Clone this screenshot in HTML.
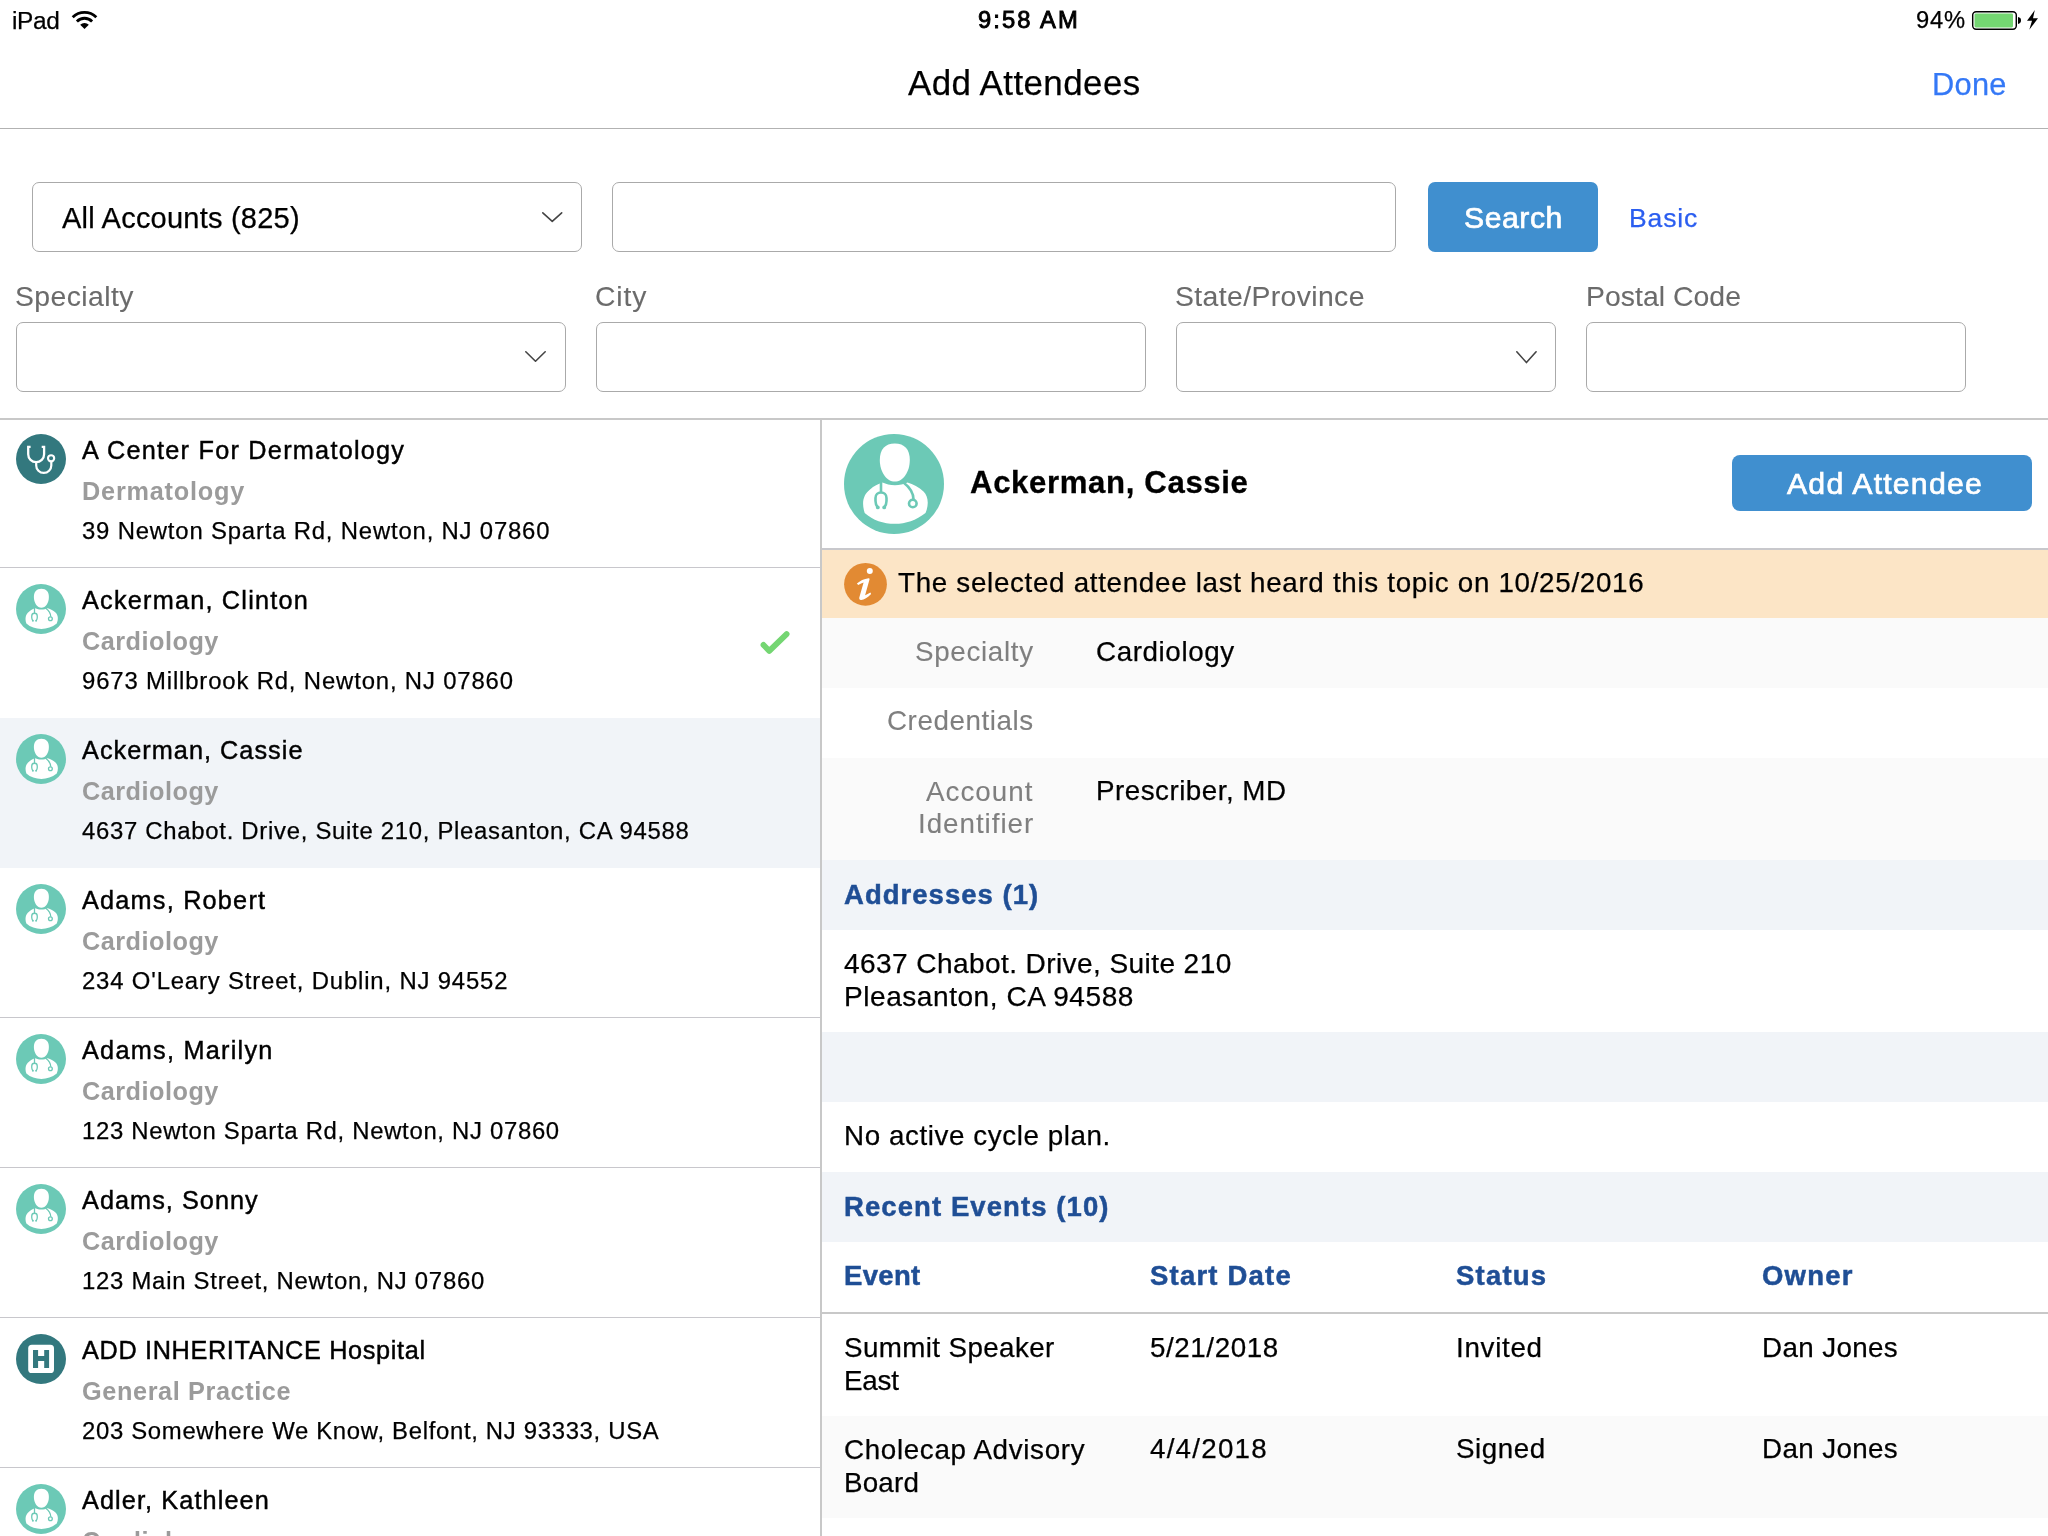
<!DOCTYPE html><html><head><meta charset="utf-8"><title>Add Attendees</title><style>
html,body{margin:0;padding:0;width:2048px;height:1536px;overflow:hidden;background:#fff;}
body{position:relative;font-family:"Liberation Sans", sans-serif;}
.t{position:absolute;white-space:nowrap;line-height:1;will-change:transform;}
</style></head><body>
<svg style="position:absolute;left:70px;top:8px" width="30" height="24" viewBox="70 8 30 24"><path d="M71.7 16.2 A18.1 18.1 0 0 1 97.3 16.2 L95.3 18.2 A15.3 15.3 0 0 0 73.7 18.2 Z" fill="#000"/><path d="M75.9 20.4 A12.1 12.1 0 0 1 93.1 20.4 L91.1 22.4 A9.3 9.3 0 0 0 77.9 22.4 Z" fill="#000"/><path d="M80.2 24.7 A6.1 6.1 0 0 1 88.8 24.7 L84.5 29 Z" fill="#000"/></svg>
<svg style="position:absolute;left:1960px;top:0px" width="88" height="40" viewBox="1960 0 88 40"><rect x="1972.7" y="11.7" width="43.6" height="17.5" rx="3.4" fill="none" stroke="#000" stroke-width="1.45"/><rect x="1974.5" y="13.5" width="38.5" height="13.9" rx="1.3" fill="#74d672"/><path d="M2018 17 C2020 17.3 2021 18.5 2021 20.4 C2021 22.3 2020 23.6 2018 23.9 Z" fill="#000"/><path d="M2034.8 10.1 L2027 20.8 L2032 20.8 L2029.3 29.7 L2038 18.3 L2033 18.3 Z" fill="#000"/></svg>
<div style="position:absolute;left:0px;top:128px;width:2048px;height:1px;background:#b2b2b2;"></div>
<div style="position:absolute;left:32px;top:182px;width:548px;height:68px;border:1px solid #aaa;border-radius:7px;background:#fff"></div>
<svg style="position:absolute;left:539.7px;top:209.8px" width="24.5" height="14.199999999999989" viewBox="-2 -2 24.5 14.199999999999989"><path d="M0.8 0.8 L10.25 9.399999999999988 L19.7 0.8" stroke="#444" stroke-width="1.6" fill="none" stroke-linecap="round" stroke-linejoin="round"/></svg>
<div style="position:absolute;left:612px;top:182px;width:782px;height:68px;border:1px solid #aaa;border-radius:7px;background:#fff"></div>
<div style="position:absolute;left:1428px;top:182px;width:170px;height:70px;border-radius:7px;background:#408fcf"></div>
<div style="position:absolute;left:16px;top:322px;width:548px;height:68px;border:1px solid #aaa;border-radius:7px;background:#fff"></div>
<div style="position:absolute;left:596px;top:322px;width:548px;height:68px;border:1px solid #aaa;border-radius:7px;background:#fff"></div>
<div style="position:absolute;left:1176px;top:322px;width:378px;height:68px;border:1px solid #aaa;border-radius:7px;background:#fff"></div>
<div style="position:absolute;left:1586px;top:322px;width:378px;height:68px;border:1px solid #aaa;border-radius:7px;background:#fff"></div>
<svg style="position:absolute;left:523px;top:349px" width="25" height="15" viewBox="-2 -2 25 15"><path d="M0.8 0.8 L10.5 10.2 L20.2 0.8" stroke="#444" stroke-width="1.6" fill="none" stroke-linecap="round" stroke-linejoin="round"/></svg>
<svg style="position:absolute;left:1513.7px;top:348.6px" width="24.899999999999864" height="16.399999999999977" viewBox="-2 -2 24.899999999999864 16.399999999999977"><path d="M0.8 0.8 L10.449999999999932 11.599999999999977 L20.099999999999863 0.8" stroke="#444" stroke-width="1.6" fill="none" stroke-linecap="round" stroke-linejoin="round"/></svg>
<div style="position:absolute;left:0px;top:418px;width:2048px;height:2px;background:#c8c8c8;"></div>
<div style="position:absolute;left:0px;top:718px;width:820px;height:150px;background:#f1f4f8;"></div>
<div style="position:absolute;left:16px;top:434px;width:50px;height:50px"><svg width="50" height="50" viewBox="0 0 50 50" style="display:block"><circle cx="25" cy="25" r="25" fill="#33787e"/><path d="M14.6 12.9 L12.2 12.9 L12.2 20.2 A7.95 7.95 0 0 0 28.1 20.2 L28.1 12.9 L25.7 12.9" stroke="#fff" stroke-width="2.3" fill="none" stroke-linejoin="miter"/><path d="M20.2 28 L20.2 31.4 A7.55 7.55 0 0 0 35.3 31.4 L35.3 27.6" stroke="#fff" stroke-width="2.2" fill="none"/><circle cx="35.1" cy="24.3" r="3.1" stroke="#fff" stroke-width="2.1" fill="none"/></svg></div>
<div style="position:absolute;left:0px;top:567px;width:820px;height:1px;background:#c8c7cc;"></div>
<div style="position:absolute;left:16px;top:584px;width:50px;height:50px"><svg width="50" height="50" viewBox="0 0 100 100" style="display:block"><circle cx="50" cy="50" r="50" fill="#6cc9b6"/><path d="M50.8 9.6 C60.5 9.6 65.8 15.5 65.8 26 C65.8 38 59 47.6 50.8 47.6 C42.6 47.6 35.8 38 35.8 26 C35.8 15.5 41.1 9.6 50.8 9.6 Z" fill="#fff"/><path d="M20.7 79 C17.5 69 19 61 26 55.5 C30 52 34 50 38.5 48.6 C42 50.3 46 51.2 51 51.2 C55.5 51.2 59.5 50.2 63.5 48.4 C69 50 75 53 79.5 57.5 C84.5 62.5 85 71 81.5 79 C72 86.5 62 89.8 50.8 89.8 C39.5 89.8 29 86.5 20.7 79 Z" fill="#fff"/><path d="M37 48 L37 58.5" stroke="#6cc9b6" stroke-width="2.6" fill="none"/><path d="M33.6 73.2 C32 71 31.5 69.5 31.5 67 L31.5 64 C31.5 60.5 34 58.5 37 58.5 C40 58.5 42.5 60.5 42.5 64 L42.5 67 C42.5 69.5 42 71 40.4 73.2" stroke="#6cc9b6" stroke-width="2.6" fill="none"/><circle cx="33.8" cy="73.4" r="1.9" fill="#6cc9b6"/><circle cx="40.2" cy="73.4" r="1.9" fill="#6cc9b6"/><path d="M59.5 48.5 C66 53.5 69.5 59 69.5 65.5" stroke="#6cc9b6" stroke-width="2.6" fill="none"/><circle cx="68.8" cy="69.5" r="3.8" stroke="#6cc9b6" stroke-width="2.6" fill="#fff"/></svg></div>
<div style="position:absolute;left:16px;top:734px;width:50px;height:50px"><svg width="50" height="50" viewBox="0 0 100 100" style="display:block"><circle cx="50" cy="50" r="50" fill="#6cc9b6"/><path d="M50.8 9.6 C60.5 9.6 65.8 15.5 65.8 26 C65.8 38 59 47.6 50.8 47.6 C42.6 47.6 35.8 38 35.8 26 C35.8 15.5 41.1 9.6 50.8 9.6 Z" fill="#fff"/><path d="M20.7 79 C17.5 69 19 61 26 55.5 C30 52 34 50 38.5 48.6 C42 50.3 46 51.2 51 51.2 C55.5 51.2 59.5 50.2 63.5 48.4 C69 50 75 53 79.5 57.5 C84.5 62.5 85 71 81.5 79 C72 86.5 62 89.8 50.8 89.8 C39.5 89.8 29 86.5 20.7 79 Z" fill="#fff"/><path d="M37 48 L37 58.5" stroke="#6cc9b6" stroke-width="2.6" fill="none"/><path d="M33.6 73.2 C32 71 31.5 69.5 31.5 67 L31.5 64 C31.5 60.5 34 58.5 37 58.5 C40 58.5 42.5 60.5 42.5 64 L42.5 67 C42.5 69.5 42 71 40.4 73.2" stroke="#6cc9b6" stroke-width="2.6" fill="none"/><circle cx="33.8" cy="73.4" r="1.9" fill="#6cc9b6"/><circle cx="40.2" cy="73.4" r="1.9" fill="#6cc9b6"/><path d="M59.5 48.5 C66 53.5 69.5 59 69.5 65.5" stroke="#6cc9b6" stroke-width="2.6" fill="none"/><circle cx="68.8" cy="69.5" r="3.8" stroke="#6cc9b6" stroke-width="2.6" fill="#fff"/></svg></div>
<div style="position:absolute;left:16px;top:884px;width:50px;height:50px"><svg width="50" height="50" viewBox="0 0 100 100" style="display:block"><circle cx="50" cy="50" r="50" fill="#6cc9b6"/><path d="M50.8 9.6 C60.5 9.6 65.8 15.5 65.8 26 C65.8 38 59 47.6 50.8 47.6 C42.6 47.6 35.8 38 35.8 26 C35.8 15.5 41.1 9.6 50.8 9.6 Z" fill="#fff"/><path d="M20.7 79 C17.5 69 19 61 26 55.5 C30 52 34 50 38.5 48.6 C42 50.3 46 51.2 51 51.2 C55.5 51.2 59.5 50.2 63.5 48.4 C69 50 75 53 79.5 57.5 C84.5 62.5 85 71 81.5 79 C72 86.5 62 89.8 50.8 89.8 C39.5 89.8 29 86.5 20.7 79 Z" fill="#fff"/><path d="M37 48 L37 58.5" stroke="#6cc9b6" stroke-width="2.6" fill="none"/><path d="M33.6 73.2 C32 71 31.5 69.5 31.5 67 L31.5 64 C31.5 60.5 34 58.5 37 58.5 C40 58.5 42.5 60.5 42.5 64 L42.5 67 C42.5 69.5 42 71 40.4 73.2" stroke="#6cc9b6" stroke-width="2.6" fill="none"/><circle cx="33.8" cy="73.4" r="1.9" fill="#6cc9b6"/><circle cx="40.2" cy="73.4" r="1.9" fill="#6cc9b6"/><path d="M59.5 48.5 C66 53.5 69.5 59 69.5 65.5" stroke="#6cc9b6" stroke-width="2.6" fill="none"/><circle cx="68.8" cy="69.5" r="3.8" stroke="#6cc9b6" stroke-width="2.6" fill="#fff"/></svg></div>
<div style="position:absolute;left:0px;top:1017px;width:820px;height:1px;background:#c8c7cc;"></div>
<div style="position:absolute;left:16px;top:1034px;width:50px;height:50px"><svg width="50" height="50" viewBox="0 0 100 100" style="display:block"><circle cx="50" cy="50" r="50" fill="#6cc9b6"/><path d="M50.8 9.6 C60.5 9.6 65.8 15.5 65.8 26 C65.8 38 59 47.6 50.8 47.6 C42.6 47.6 35.8 38 35.8 26 C35.8 15.5 41.1 9.6 50.8 9.6 Z" fill="#fff"/><path d="M20.7 79 C17.5 69 19 61 26 55.5 C30 52 34 50 38.5 48.6 C42 50.3 46 51.2 51 51.2 C55.5 51.2 59.5 50.2 63.5 48.4 C69 50 75 53 79.5 57.5 C84.5 62.5 85 71 81.5 79 C72 86.5 62 89.8 50.8 89.8 C39.5 89.8 29 86.5 20.7 79 Z" fill="#fff"/><path d="M37 48 L37 58.5" stroke="#6cc9b6" stroke-width="2.6" fill="none"/><path d="M33.6 73.2 C32 71 31.5 69.5 31.5 67 L31.5 64 C31.5 60.5 34 58.5 37 58.5 C40 58.5 42.5 60.5 42.5 64 L42.5 67 C42.5 69.5 42 71 40.4 73.2" stroke="#6cc9b6" stroke-width="2.6" fill="none"/><circle cx="33.8" cy="73.4" r="1.9" fill="#6cc9b6"/><circle cx="40.2" cy="73.4" r="1.9" fill="#6cc9b6"/><path d="M59.5 48.5 C66 53.5 69.5 59 69.5 65.5" stroke="#6cc9b6" stroke-width="2.6" fill="none"/><circle cx="68.8" cy="69.5" r="3.8" stroke="#6cc9b6" stroke-width="2.6" fill="#fff"/></svg></div>
<div style="position:absolute;left:0px;top:1167px;width:820px;height:1px;background:#c8c7cc;"></div>
<div style="position:absolute;left:16px;top:1184px;width:50px;height:50px"><svg width="50" height="50" viewBox="0 0 100 100" style="display:block"><circle cx="50" cy="50" r="50" fill="#6cc9b6"/><path d="M50.8 9.6 C60.5 9.6 65.8 15.5 65.8 26 C65.8 38 59 47.6 50.8 47.6 C42.6 47.6 35.8 38 35.8 26 C35.8 15.5 41.1 9.6 50.8 9.6 Z" fill="#fff"/><path d="M20.7 79 C17.5 69 19 61 26 55.5 C30 52 34 50 38.5 48.6 C42 50.3 46 51.2 51 51.2 C55.5 51.2 59.5 50.2 63.5 48.4 C69 50 75 53 79.5 57.5 C84.5 62.5 85 71 81.5 79 C72 86.5 62 89.8 50.8 89.8 C39.5 89.8 29 86.5 20.7 79 Z" fill="#fff"/><path d="M37 48 L37 58.5" stroke="#6cc9b6" stroke-width="2.6" fill="none"/><path d="M33.6 73.2 C32 71 31.5 69.5 31.5 67 L31.5 64 C31.5 60.5 34 58.5 37 58.5 C40 58.5 42.5 60.5 42.5 64 L42.5 67 C42.5 69.5 42 71 40.4 73.2" stroke="#6cc9b6" stroke-width="2.6" fill="none"/><circle cx="33.8" cy="73.4" r="1.9" fill="#6cc9b6"/><circle cx="40.2" cy="73.4" r="1.9" fill="#6cc9b6"/><path d="M59.5 48.5 C66 53.5 69.5 59 69.5 65.5" stroke="#6cc9b6" stroke-width="2.6" fill="none"/><circle cx="68.8" cy="69.5" r="3.8" stroke="#6cc9b6" stroke-width="2.6" fill="#fff"/></svg></div>
<div style="position:absolute;left:0px;top:1317px;width:820px;height:1px;background:#c8c7cc;"></div>
<div style="position:absolute;left:16px;top:1334px;width:50px;height:50px"><svg width="50" height="50" viewBox="0 0 50 50" style="display:block"><circle cx="25" cy="25" r="25" fill="#33787e"/><rect x="12.2" y="10.8" width="25.8" height="28.2" rx="3.6" fill="#fff"/><path d="M17 16.1 H22.1 V22 H28.2 V16.1 H33.1 V33.9 H28.2 V26.9 H22.1 V33.9 H17 Z" fill="#33787e"/></svg></div>
<div style="position:absolute;left:0px;top:1467px;width:820px;height:1px;background:#c8c7cc;"></div>
<div style="position:absolute;left:16px;top:1484px;width:50px;height:50px"><svg width="50" height="50" viewBox="0 0 100 100" style="display:block"><circle cx="50" cy="50" r="50" fill="#6cc9b6"/><path d="M50.8 9.6 C60.5 9.6 65.8 15.5 65.8 26 C65.8 38 59 47.6 50.8 47.6 C42.6 47.6 35.8 38 35.8 26 C35.8 15.5 41.1 9.6 50.8 9.6 Z" fill="#fff"/><path d="M20.7 79 C17.5 69 19 61 26 55.5 C30 52 34 50 38.5 48.6 C42 50.3 46 51.2 51 51.2 C55.5 51.2 59.5 50.2 63.5 48.4 C69 50 75 53 79.5 57.5 C84.5 62.5 85 71 81.5 79 C72 86.5 62 89.8 50.8 89.8 C39.5 89.8 29 86.5 20.7 79 Z" fill="#fff"/><path d="M37 48 L37 58.5" stroke="#6cc9b6" stroke-width="2.6" fill="none"/><path d="M33.6 73.2 C32 71 31.5 69.5 31.5 67 L31.5 64 C31.5 60.5 34 58.5 37 58.5 C40 58.5 42.5 60.5 42.5 64 L42.5 67 C42.5 69.5 42 71 40.4 73.2" stroke="#6cc9b6" stroke-width="2.6" fill="none"/><circle cx="33.8" cy="73.4" r="1.9" fill="#6cc9b6"/><circle cx="40.2" cy="73.4" r="1.9" fill="#6cc9b6"/><path d="M59.5 48.5 C66 53.5 69.5 59 69.5 65.5" stroke="#6cc9b6" stroke-width="2.6" fill="none"/><circle cx="68.8" cy="69.5" r="3.8" stroke="#6cc9b6" stroke-width="2.6" fill="#fff"/></svg></div>
<svg style="position:absolute;left:750px;top:620px" width="50" height="45" viewBox="750 620 50 45"><path d="M763.5 644.9 L769.3 650.9 L786.6 634.1" stroke="#74d672" stroke-width="5.8" fill="none" stroke-linecap="round" stroke-linejoin="round"/></svg>
<div style="position:absolute;left:820px;top:420px;width:2px;height:1116px;background:#c8c8c8;"></div>
<div style="position:absolute;left:844px;top:434px;width:100px;height:100px"><svg width="100" height="100" viewBox="0 0 100 100" style="display:block"><circle cx="50" cy="50" r="50" fill="#6cc9b6"/><path d="M50.8 9.6 C60.5 9.6 65.8 15.5 65.8 26 C65.8 38 59 47.6 50.8 47.6 C42.6 47.6 35.8 38 35.8 26 C35.8 15.5 41.1 9.6 50.8 9.6 Z" fill="#fff"/><path d="M20.7 79 C17.5 69 19 61 26 55.5 C30 52 34 50 38.5 48.6 C42 50.3 46 51.2 51 51.2 C55.5 51.2 59.5 50.2 63.5 48.4 C69 50 75 53 79.5 57.5 C84.5 62.5 85 71 81.5 79 C72 86.5 62 89.8 50.8 89.8 C39.5 89.8 29 86.5 20.7 79 Z" fill="#fff"/><path d="M37 48 L37 58.5" stroke="#6cc9b6" stroke-width="2.6" fill="none"/><path d="M33.6 73.2 C32 71 31.5 69.5 31.5 67 L31.5 64 C31.5 60.5 34 58.5 37 58.5 C40 58.5 42.5 60.5 42.5 64 L42.5 67 C42.5 69.5 42 71 40.4 73.2" stroke="#6cc9b6" stroke-width="2.6" fill="none"/><circle cx="33.8" cy="73.4" r="1.9" fill="#6cc9b6"/><circle cx="40.2" cy="73.4" r="1.9" fill="#6cc9b6"/><path d="M59.5 48.5 C66 53.5 69.5 59 69.5 65.5" stroke="#6cc9b6" stroke-width="2.6" fill="none"/><circle cx="68.8" cy="69.5" r="3.8" stroke="#6cc9b6" stroke-width="2.6" fill="#fff"/></svg></div>
<div style="position:absolute;left:1732px;top:455px;width:300px;height:56px;border-radius:8px;background:#408fcf"></div>
<div style="position:absolute;left:822px;top:548px;width:1226px;height:2px;background:#c8c8cc;"></div>
<div style="position:absolute;left:822px;top:550px;width:1226px;height:68px;background:#fce5c6;"></div>
<svg style="position:absolute;left:840px;top:560px" width="50" height="50" viewBox="840 560 50 50"><circle cx="865.5" cy="584.3" r="21.4" fill="#e28a33"/><circle cx="869.8" cy="570.9" r="3.0" fill="#fff"/><path d="M856.9 583.6 C860 581 864 578.6 868.6 578.2 C869.4 578.2 869.7 578.8 869.5 579.6 L865.1 595.2 C866.8 594.6 868.6 593.6 870.4 592.4 L871.1 593.9 C867.6 597.4 864.1 599.8 861.2 599.9 C859.6 600 859 599.1 859.3 597.6 L863.6 582.6 C862 583 860.2 583.9 858.2 585.1 Z" fill="#fff"/></svg>
<div style="position:absolute;left:822px;top:618px;width:1226px;height:70px;background:#fafafa;"></div>
<div style="position:absolute;left:822px;top:758px;width:1226px;height:102px;background:#fafafa;"></div>
<div style="position:absolute;left:822px;top:860px;width:1226px;height:70px;background:#f1f4f8;"></div>
<div style="position:absolute;left:822px;top:1032px;width:1226px;height:70px;background:#f1f4f8;"></div>
<div style="position:absolute;left:822px;top:1172px;width:1226px;height:70px;background:#f1f4f8;"></div>
<div style="position:absolute;left:822px;top:1312px;width:1226px;height:2px;background:#c8c8c8;"></div>
<div style="position:absolute;left:822px;top:1416px;width:1226px;height:102px;background:#fafafa;"></div>
<div class="t" style="top:8.84px;font-size:24.41px;color:#000;letter-spacing:-0.30px;-webkit-text-stroke:0.25px #000;left:11.65px;">iPad</div>
<div class="t" style="top:9.40px;font-size:23.74px;color:#000;letter-spacing:2.11px;-webkit-text-stroke:0.9px #000;left:978.17px;">9:58 AM</div>
<div class="t" style="top:9.40px;font-size:23.74px;color:#000;letter-spacing:0.80px;-webkit-text-stroke:0.25px #000;left:1916.17px;">94%</div>
<div class="t" style="top:66.47px;font-size:34.88px;color:#000;letter-spacing:0.44px;-webkit-text-stroke:0.25px #000;left:907.78px;">Add Attendees</div>
<div class="t" style="top:69.97px;font-size:30.75px;color:#3478f6;letter-spacing:0.30px;-webkit-text-stroke:0.25px #3478f6;left:1932.42px;">Done</div>
<div class="t" style="top:203.63px;font-size:29.02px;color:#000;letter-spacing:0.22px;-webkit-text-stroke:0.25px #000;left:62.18px;">All Accounts (825)</div>
<div class="t" style="top:202.55px;font-size:30.18px;color:#fff;letter-spacing:0.54px;-webkit-text-stroke:0.7px #fff;left:1463.54px;">Search</div>
<div class="t" style="top:204.55px;font-size:26.52px;color:#2b5ef0;letter-spacing:0.87px;-webkit-text-stroke:0.25px #2b5ef0;left:1628.67px;">Basic</div>
<div class="t" style="top:281.80px;font-size:28.35px;color:#6b6b6b;letter-spacing:0.43px;-webkit-text-stroke:0.1px #6b6b6b;left:15.41px;">Specialty</div>
<div class="t" style="top:281.80px;font-size:28.35px;color:#6b6b6b;letter-spacing:0.89px;-webkit-text-stroke:0.1px #6b6b6b;left:595.41px;">City</div>
<div class="t" style="top:281.80px;font-size:28.35px;color:#6b6b6b;letter-spacing:0.39px;-webkit-text-stroke:0.1px #6b6b6b;left:1175.41px;">State/Province</div>
<div class="t" style="top:281.80px;font-size:28.35px;color:#6b6b6b;letter-spacing:0.05px;-webkit-text-stroke:0.1px #6b6b6b;left:1586.01px;">Postal Code</div>
<div class="t" style="top:438.41px;font-size:25.27px;color:#000;letter-spacing:1.24px;-webkit-text-stroke:0.45px #000;left:82.12px;">A Center For Dermatology</div>
<div class="t" style="top:479.41px;font-size:25.27px;color:#9b9b9b;font-weight:700;letter-spacing:0.79px;left:82.12px;">Dermatology</div>
<div class="t" style="top:518.69px;font-size:23.88px;color:#000;letter-spacing:0.82px;-webkit-text-stroke:0.25px #000;left:82.16px;">39 Newton Sparta Rd, Newton, NJ 07860</div>
<div class="t" style="top:588.41px;font-size:25.27px;color:#000;letter-spacing:1.21px;-webkit-text-stroke:0.45px #000;left:82.12px;">Ackerman, Clinton</div>
<div class="t" style="top:629.41px;font-size:25.27px;color:#9b9b9b;font-weight:700;letter-spacing:0.49px;left:82.12px;">Cardiology</div>
<div class="t" style="top:668.69px;font-size:23.88px;color:#000;letter-spacing:0.85px;-webkit-text-stroke:0.25px #000;left:82.16px;">9673 Millbrook Rd, Newton, NJ 07860</div>
<div class="t" style="top:738.41px;font-size:25.27px;color:#000;letter-spacing:1.03px;-webkit-text-stroke:0.45px #000;left:82.12px;">Ackerman, Cassie</div>
<div class="t" style="top:779.41px;font-size:25.27px;color:#9b9b9b;font-weight:700;letter-spacing:0.49px;left:82.12px;">Cardiology</div>
<div class="t" style="top:818.69px;font-size:23.88px;color:#000;letter-spacing:0.72px;-webkit-text-stroke:0.25px #000;left:82.16px;">4637 Chabot. Drive, Suite 210, Pleasanton, CA 94588</div>
<div class="t" style="top:888.41px;font-size:25.27px;color:#000;letter-spacing:1.21px;-webkit-text-stroke:0.45px #000;left:82.12px;">Adams, Robert</div>
<div class="t" style="top:929.41px;font-size:25.27px;color:#9b9b9b;font-weight:700;letter-spacing:0.49px;left:82.12px;">Cardiology</div>
<div class="t" style="top:968.69px;font-size:23.88px;color:#000;letter-spacing:0.84px;-webkit-text-stroke:0.25px #000;left:82.16px;">234 O'Leary Street, Dublin, NJ 94552</div>
<div class="t" style="top:1038.41px;font-size:25.27px;color:#000;letter-spacing:1.25px;-webkit-text-stroke:0.45px #000;left:82.12px;">Adams, Marilyn</div>
<div class="t" style="top:1079.41px;font-size:25.27px;color:#9b9b9b;font-weight:700;letter-spacing:0.49px;left:82.12px;">Cardiology</div>
<div class="t" style="top:1118.69px;font-size:23.88px;color:#000;letter-spacing:0.70px;-webkit-text-stroke:0.25px #000;left:82.16px;">123 Newton Sparta Rd, Newton, NJ 07860</div>
<div class="t" style="top:1188.41px;font-size:25.27px;color:#000;letter-spacing:1.04px;-webkit-text-stroke:0.45px #000;left:82.12px;">Adams, Sonny</div>
<div class="t" style="top:1229.41px;font-size:25.27px;color:#9b9b9b;font-weight:700;letter-spacing:0.49px;left:82.12px;">Cardiology</div>
<div class="t" style="top:1268.69px;font-size:23.88px;color:#000;letter-spacing:0.75px;-webkit-text-stroke:0.25px #000;left:82.16px;">123 Main Street, Newton, NJ 07860</div>
<div class="t" style="top:1338.41px;font-size:25.27px;color:#000;letter-spacing:0.65px;-webkit-text-stroke:0.45px #000;left:82.12px;">ADD INHERITANCE Hospital</div>
<div class="t" style="top:1379.41px;font-size:25.27px;color:#9b9b9b;font-weight:700;letter-spacing:0.61px;left:82.12px;">General Practice</div>
<div class="t" style="top:1418.69px;font-size:23.88px;color:#000;letter-spacing:0.69px;-webkit-text-stroke:0.25px #000;left:82.16px;">203 Somewhere We Know, Belfont, NJ 93333, USA</div>
<div class="t" style="top:1488.41px;font-size:25.27px;color:#000;letter-spacing:1.10px;-webkit-text-stroke:0.45px #000;left:82.12px;">Adler, Kathleen</div>
<div class="t" style="top:1529.41px;font-size:25.27px;color:#9b9b9b;font-weight:700;letter-spacing:0.49px;left:82.12px;">Cardiology</div>
<div class="t" style="top:467.34px;font-size:31.14px;color:#000;font-weight:700;letter-spacing:0.65px;-webkit-text-stroke:0.3px #000;left:969.91px;">Ackerman, Cassie</div>
<div class="t" style="top:468.78px;font-size:30.27px;color:#fff;letter-spacing:1.18px;-webkit-text-stroke:0.7px #fff;left:1786.64px;">Add Attendee</div>
<div class="t" style="top:569.29px;font-size:27.77px;color:#000;letter-spacing:0.69px;-webkit-text-stroke:0.25px #000;left:898.03px;">The selected attendee last heard this topic on 10/25/2016</div>
<div class="t" style="top:637.69px;font-size:27.77px;color:#7f7f7f;letter-spacing:0.68px;-webkit-text-stroke:0.1px #7f7f7f;right:1014.52px;">Specialty</div>
<div class="t" style="top:637.69px;font-size:27.77px;color:#000;letter-spacing:0.60px;-webkit-text-stroke:0.25px #000;left:1096.43px;">Cardiology</div>
<div class="t" style="top:707.39px;font-size:27.77px;color:#7f7f7f;letter-spacing:0.56px;-webkit-text-stroke:0.1px #7f7f7f;right:1014.64px;">Credentials</div>
<div class="t" style="top:778.19px;font-size:27.77px;color:#7f7f7f;letter-spacing:1.02px;-webkit-text-stroke:0.1px #7f7f7f;right:1014.18px;">Account</div>
<div class="t" style="top:810.49px;font-size:27.77px;color:#7f7f7f;letter-spacing:0.97px;-webkit-text-stroke:0.1px #7f7f7f;right:1014.23px;">Identifier</div>
<div class="t" style="top:777.09px;font-size:27.77px;color:#000;letter-spacing:0.49px;-webkit-text-stroke:0.25px #000;left:1096.43px;">Prescriber, MD</div>
<div class="t" style="top:880.54px;font-size:27.48px;color:#1f4e95;font-weight:700;letter-spacing:1.04px;-webkit-text-stroke:0.5px #1f4e95;left:844.44px;">Addresses (1)</div>
<div class="t" style="top:950.45px;font-size:28.06px;color:#000;letter-spacing:0.41px;-webkit-text-stroke:0.25px #000;left:844.42px;">4637 Chabot. Drive, Suite 210</div>
<div class="t" style="top:983.25px;font-size:28.06px;color:#000;letter-spacing:0.54px;-webkit-text-stroke:0.25px #000;left:844.42px;">Pleasanton, CA 94588</div>
<div class="t" style="top:1121.79px;font-size:27.77px;color:#000;letter-spacing:0.58px;-webkit-text-stroke:0.25px #000;left:844.43px;">No active cycle plan.</div>
<div class="t" style="top:1192.94px;font-size:27.48px;color:#1f4e95;font-weight:700;letter-spacing:1.10px;-webkit-text-stroke:0.5px #1f4e95;left:844.44px;">Recent Events (10)</div>
<div class="t" style="top:1262.04px;font-size:27.48px;color:#1f4e95;font-weight:700;letter-spacing:0.35px;-webkit-text-stroke:0.5px #1f4e95;left:844.44px;">Event</div>
<div class="t" style="top:1262.04px;font-size:27.48px;color:#1f4e95;font-weight:700;letter-spacing:1.22px;-webkit-text-stroke:0.5px #1f4e95;left:1150.04px;">Start Date</div>
<div class="t" style="top:1262.04px;font-size:27.48px;color:#1f4e95;font-weight:700;letter-spacing:1.21px;-webkit-text-stroke:0.5px #1f4e95;left:1456.04px;">Status</div>
<div class="t" style="top:1262.04px;font-size:27.48px;color:#1f4e95;font-weight:700;letter-spacing:1.23px;-webkit-text-stroke:0.5px #1f4e95;left:1762.34px;">Owner</div>
<div class="t" style="top:1334.29px;font-size:27.77px;color:#000;letter-spacing:0.39px;-webkit-text-stroke:0.25px #000;left:844.43px;">Summit Speaker</div>
<div class="t" style="top:1367.09px;font-size:27.77px;color:#000;letter-spacing:-0.19px;-webkit-text-stroke:0.25px #000;left:844.43px;">East</div>
<div class="t" style="top:1333.79px;font-size:27.77px;color:#000;letter-spacing:0.58px;-webkit-text-stroke:0.25px #000;left:1150.03px;">5/21/2018</div>
<div class="t" style="top:1333.79px;font-size:27.77px;color:#000;letter-spacing:0.70px;-webkit-text-stroke:0.25px #000;left:1456.03px;">Invited</div>
<div class="t" style="top:1333.79px;font-size:27.77px;color:#000;letter-spacing:0.37px;-webkit-text-stroke:0.25px #000;left:1762.03px;">Dan Jones</div>
<div class="t" style="top:1436.09px;font-size:27.77px;color:#000;letter-spacing:0.66px;-webkit-text-stroke:0.25px #000;left:844.43px;">Cholecap Advisory</div>
<div class="t" style="top:1469.29px;font-size:27.77px;color:#000;letter-spacing:0.20px;-webkit-text-stroke:0.25px #000;left:844.43px;">Board</div>
<div class="t" style="top:1435.49px;font-size:27.77px;color:#000;letter-spacing:1.23px;-webkit-text-stroke:0.25px #000;left:1150.03px;">4/4/2018</div>
<div class="t" style="top:1435.49px;font-size:27.77px;color:#000;letter-spacing:0.53px;-webkit-text-stroke:0.25px #000;left:1456.03px;">Signed</div>
<div class="t" style="top:1435.49px;font-size:27.77px;color:#000;letter-spacing:0.37px;-webkit-text-stroke:0.25px #000;left:1762.03px;">Dan Jones</div>
</body></html>
